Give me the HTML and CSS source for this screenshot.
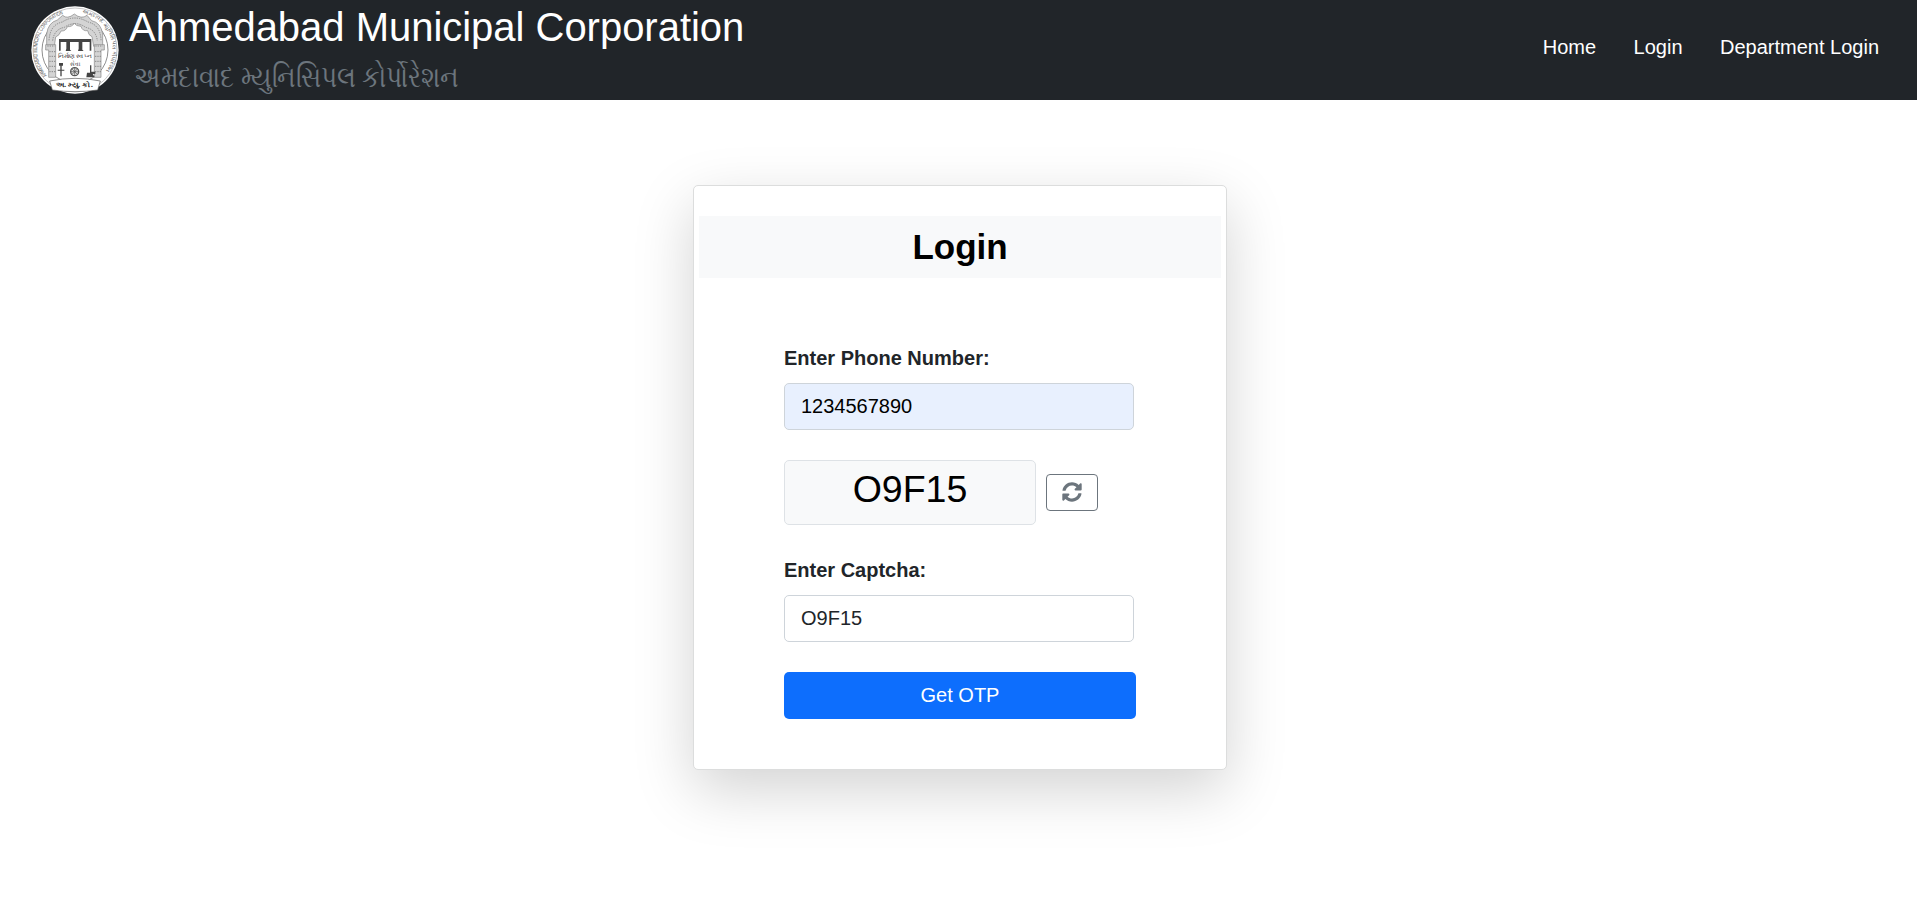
FILE: index.html
```
<!DOCTYPE html>
<html lang="en">
<head>
<meta charset="utf-8">
<title>Ahmedabad Municipal Corporation</title>
<link rel="stylesheet" href="styles.css">
</head>
<body>
<header class="navbar">
  <div class="brand">
    <svg class="seal" viewBox="0 0 264 264" aria-hidden="true">
      <defs>
        <path id="ring-left" d="M48 208A113 113 0 0 1 122 19"/>
        <path id="ring-right" d="M154 21A113 113 0 0 1 219 204"/>
      </defs>
      <circle cx="132" cy="132" r="131" fill="#fff"/>
      <g fill="none" stroke="#555" stroke-width="2">
        <circle cx="132" cy="132" r="126" stroke="#aaa"/>
        <circle cx="132" cy="132" r="99"/>
      </g>
      <g class="ring-text">
        <text textLength="226" lengthAdjust="spacingAndGlyphs"><textPath href="#ring-left">AHMEDABAD MUNICIPAL CORPORATION</textPath></text>
        <text textLength="222" lengthAdjust="spacingAndGlyphs"><textPath href="#ring-right">અમદાવાદ મ્યુનિસિપલ કોર્પોરેશન</textPath></text>
      </g>
      <g fill="#d4d4d4" stroke="#858585" stroke-width="2">
        <path d="M47 121V84q4-34 32-42l16-14q14 13 35-4q21 17 38 4l14 16q28 6 33 40v37h-27l-5-29q-11-4-13-18q-16 2-20-13q-16 0-20-10q-6 12-21 11q-4 14-19 13q-4 13-16 18l-4 28z"/>
        <path d="M44 116h30v98H53V132h-9zM220 116h-30v98h20v-82h10z"/>
      </g>
      <g fill="none" stroke="#888" stroke-width="3" stroke-dasharray="4 3">
        <path d="M54 103q3-47 40-55q36-24 77 0q38 9 39 55M65 104q4-34 35-40q33-22 64 0q31 7 35 40"/>
        <path d="M49 120h22M193 120h22M55 137h18M192 137h18M55 151h18M192 151h18M55 166h18M192 166h18M55 181h18M192 181h18M55 197h18M192 197h18"/>
      </g>
      <g fill="#444">
        <path d="M84 99h97v9H84zM84 108h5v26h-5zM106 108h11v23l4 4h-17l2-7zM143 108h11v23l4 4h-17l2-7zM176 108h5v26h-5z"/>
        <path d="M84 171h12v8h-4v32h-4v-32h-4zM80 191h20v3H80zM177 178h4v19h12v7h-8l6 10h-25l2-14h9z"/>
      </g>
      <circle cx="131" cy="197" r="12" fill="#ddd" stroke="#555" stroke-width="4"/>
      <path d="M119 197h24M131 185v24M123 189l16 16M139 189l-16 16" stroke="#555" stroke-width="2"/>
      <text class="seal-text" x="82" y="156" textLength="99" lengthAdjust="spacingAndGlyphs">નિર્માણ સ્વપ્ન</text>
      <text class="seal-text" x="118" y="179" textLength="28" lengthAdjust="spacingAndGlyphs">સેવા</text>
      <path d="M56 225q76-16 152 0l-8 27q-68 10-136 0z" fill="#fff" stroke="#555" stroke-width="2"/>
      <text class="seal-base" x="74" y="242" textLength="112" lengthAdjust="spacingAndGlyphs">અ. મ્યુ. કો.</text>
    </svg>
    <div class="brand-text">
      <h1 class="brand-name">Ahmedabad Municipal Corporation</h1>
      <svg class="brand-local" viewBox="0 0 340 50" lang="gu"><text x="5" y="32.5" transform="scale(1 1.15)" textLength="325" lengthAdjust="spacingAndGlyphs">અમદાવાદ મ્યુનિસિપલ કોર્પોરેશન</text></svg>
    </div>
  </div>
  <nav class="links">
    <a class="link">Home</a>
    <a class="link">Login</a>
    <a class="link">Department Login</a>
  </nav>
</header>
<main class="page">
  <section class="card">
    <h2 class="card-title">Login</h2>
    <form class="form">
      <label class="label" for="phone">Enter Phone Number:</label>
      <input class="input input-filled" id="phone" type="text" value="1234567890">
      <div class="captcha">
        <div class="captcha-code">O9F15</div>
        <button class="refresh" type="button" aria-label="Refresh">
          <svg class="refresh-icon" viewBox="0 0 512 512"><path fill="currentColor" d="M370.72 133.28C339.458 104.008 298.888 87.962 255.848 88c-77.458.068-144.328 53.178-162.791 126.85-1.344 5.363-6.122 9.15-11.651 9.15H24.103c-7.498 0-13.194-6.807-11.807-14.176C33.933 94.924 134.813 8 256 8c66.448 0 126.791 26.136 171.315 68.685L463.03 40.97C478.149 25.851 504 36.559 504 57.941V192c0 13.255-10.745 24-24 24H345.941c-21.382 0-32.09-25.851-16.971-40.971l41.75-41.749zM32 296h134.059c21.382 0 32.09 25.851 16.971 40.971l-41.75 41.75c31.262 29.273 71.835 45.319 114.876 45.28 77.418-.07 144.315-53.144 162.787-126.849 1.344-5.363 6.122-9.15 11.651-9.15h57.304c7.498 0 13.194 6.807 11.807 14.176C478.067 417.076 377.187 504 256 504c-66.448 0-126.791-26.136-171.315-68.685L48.97 471.03C33.851 486.149 8 475.441 8 454.059V320c0-13.255 10.745-24 24-24z"/></svg>
        </button>
      </div>
      <label class="label" for="captcha">Enter Captcha:</label>
      <input class="input" id="captcha" type="text" value="O9F15">
      <button class="submit" type="button">Get OTP</button>
    </form>
  </section>
</main>
</body>
</html>
```
FILE: styles.css
```
* { box-sizing: border-box; }
body {
  min-height: 100vh;
  margin: 0;
  background: #fff;
  color: #212529;
  font: 20px/30px "Liberation Sans", Arial, sans-serif;
}
.navbar {
  display: flex;
  justify-content: space-between;
  height: 100px;
  padding: 0 38px 0 31px;
  background: #212529;
}
.brand { display: flex; }
.seal { width: 88px; height: 88px; margin-top: 6px; }
.brand-text { display: flex; flex-direction: column; margin-left: 10px; }
.brand-name {
  height: 50px;
  margin: 0;
  padding-top: 3px;
  color: #fff;
  font-size: 40px;
  font-weight: 400;
  letter-spacing: -.02px;
  line-height: 48px;
}
.brand-local {
  width: 340px;
  height: 50px;
  overflow: visible;
  fill: #6c757d;
  font: 300 26px "Noto Sans", sans-serif;
}
.ring-text { fill: #555; font: 17px "Liberation Sans", sans-serif; }
.seal-text { fill: #333; font: 18px "Noto Sans", sans-serif; }
.seal-base { fill: #222; font: bold 20px "Noto Sans", sans-serif; }
.links { display: flex; gap: 37.5px; padding-top: 32px; }
.link { color: #fff; }
.page {
  display: flex;
  align-items: flex-start;
  justify-content: center;
  min-height: 810px;
  padding: 85px 0 0 3px;
}
.card {
  width: 534px;
  height: 585px;
  padding: 30px 5px;
  border: 1px solid #dcdddd;
  border-radius: 5px;
  background: #fff;
  box-shadow: 0 20px 60px rgba(0, 0, 0, .175);
}
.card-title {
  height: 62px;
  margin: 0;
  background: #f8f9fa;
  color: #000;
  font-size: 35px;
  font-weight: 700;
  line-height: 62px;
  text-align: center;
}
.form {
  display: flex;
  flex-direction: column;
  width: 352px;
  margin: 65px 0 0 85px;
}
.label { height: 40px; font-weight: 700; }
.input {
  width: 350px;
  height: 47px;
  padding: 0 16px;
  border: 1px solid #ced4da;
  border-radius: 5px;
  background: #fff;
  color: #212529;
  font: inherit;
}
.input-filled { background: #e8f0fe; color: #000; }
.captcha {
  display: flex;
  align-items: center;
  gap: 10px;
  height: 65px;
  margin: 30px 0;
}
.captcha-code {
  width: 252px;
  height: 65px;
  border: 1px solid #dee2e6;
  border-radius: 5px;
  background: #f8f9fa;
  color: #000;
  font-size: 37.5px;
  line-height: 57px;
  text-align: center;
}
.refresh {
  display: flex;
  align-items: center;
  justify-content: center;
  width: 52px;
  height: 37px;
  padding: 0 0 2px;
  border: 1px solid #6c757d;
  border-radius: 4px;
  background: #fff;
  color: #6c757d;
}
.refresh-icon { width: 20px; height: 20px; }
.submit {
  height: 47px;
  margin-top: 30px;
  padding: 0 0 2px;
  border: 0;
  border-radius: 5px;
  background: #0d6efd;
  color: #fff;
  font: inherit;
}
```
